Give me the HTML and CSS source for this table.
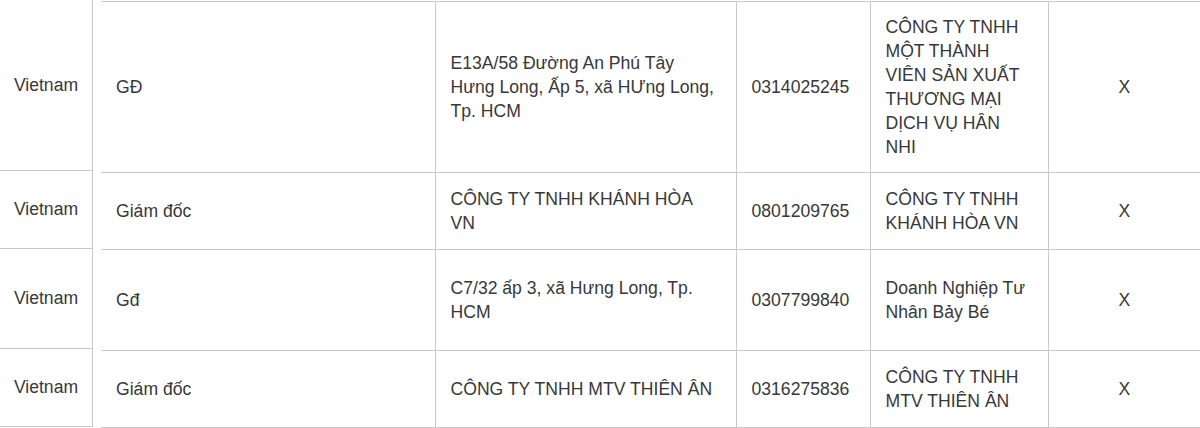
FILE: index.html
```html
<!DOCTYPE html>
<html lang="vi">
<head>
<meta charset="utf-8">
<title>Bảng</title>
<link rel="stylesheet" href="styles.css">
</head>
<body>
<div class="wrap">
  <table class="side">
    <tr class="r1"><td>Vietnam</td></tr>
    <tr class="r2"><td>Vietnam</td></tr>
    <tr class="r3"><td>Vietnam</td></tr>
    <tr class="r4"><td>Vietnam</td></tr>
  </table>
  <table class="main">
    <colgroup>
      <col class="c1"><col class="c2"><col class="c3"><col class="c4"><col class="c5">
    </colgroup>
    <tr class="r1">
      <td>GĐ</td>
      <td>E13A/58 Đường An Phú Tây Hưng Long, Ấp 5, xã HƯng Long, Tp. HCM</td>
      <td>0314025245</td>
      <td>CÔNG TY TNHH MỘT THÀNH VIÊN SẢN XUẤT THƯƠNG MẠI DỊCH VỤ HÂN NHI</td>
      <td class="x">X</td>
    </tr>
    <tr class="r2">
      <td>Giám đốc</td>
      <td>CÔNG TY TNHH KHÁNH HÒA VN</td>
      <td>0801209765</td>
      <td>CÔNG TY TNHH KHÁNH HÒA VN</td>
      <td class="x">X</td>
    </tr>
    <tr class="r3">
      <td>Gđ</td>
      <td>C7/32 ấp 3, xã Hưng Long, Tp. HCM</td>
      <td>0307799840</td>
      <td>Doanh Nghiệp Tư Nhân Bảy Bé</td>
      <td class="x">X</td>
    </tr>
    <tr class="r4">
      <td>Giám đốc</td>
      <td>CÔNG TY TNHH MTV THIÊN ÂN</td>
      <td>0316275836</td>
      <td>CÔNG TY TNHH MTV THIÊN ÂN</td>
      <td class="x">X</td>
    </tr>
  </table>
</div>
</body>
</html>
```

FILE: styles.css
```css
html, body {
  margin: 0;
  padding: 0;
  background: #fff;
}
body {
  font-family: "Liberation Sans", Arial, sans-serif;
  font-size: 17.6px;
  line-height: 24px;
  color: #383838;
}
.wrap {
  display: flex;
  align-items: flex-start;
  gap: 8px;
}
table {
  border-collapse: collapse;
  table-layout: fixed;
}
td {
  vertical-align: middle;
  padding: 0 15px;
  border: 0;
}
.side {
  width: 93px;
  flex: 0 0 93px;
}
.side td {
  text-align: center;
  padding: 0;
  border-right: 1px solid #c9c9c9;
  border-bottom: 1px solid #c9c9c9;
}
.side .r1 { height: 170px; }
.side .r2 { height: 78px; }
.side .r3 { height: 100px; }
.side .r4 { height: 78px; }

.main {
  flex: 1 1 auto;
  width: 1099px;
  margin-top: 1px;
  border-top: 1px solid #c9c9c9;
}
.main td {
  border-bottom: 1px solid #c9c9c9;
  border-left: 1px solid #c9c9c9;
}
.main td:first-child {
  border-left: 0;
}
.c1 { width: 334px; }
.c2 { width: 301px; }
.c3 { width: 134px; }
.c4 { width: 178px; }
.c5 { width: 152px; }
.main .r1 { height: 171px; }
.main .r2 { height: 77px; }
.main .r3 { height: 101px; }
.main .r4 { height: 77px; }
.main td.x {
  text-align: center;
}
```
